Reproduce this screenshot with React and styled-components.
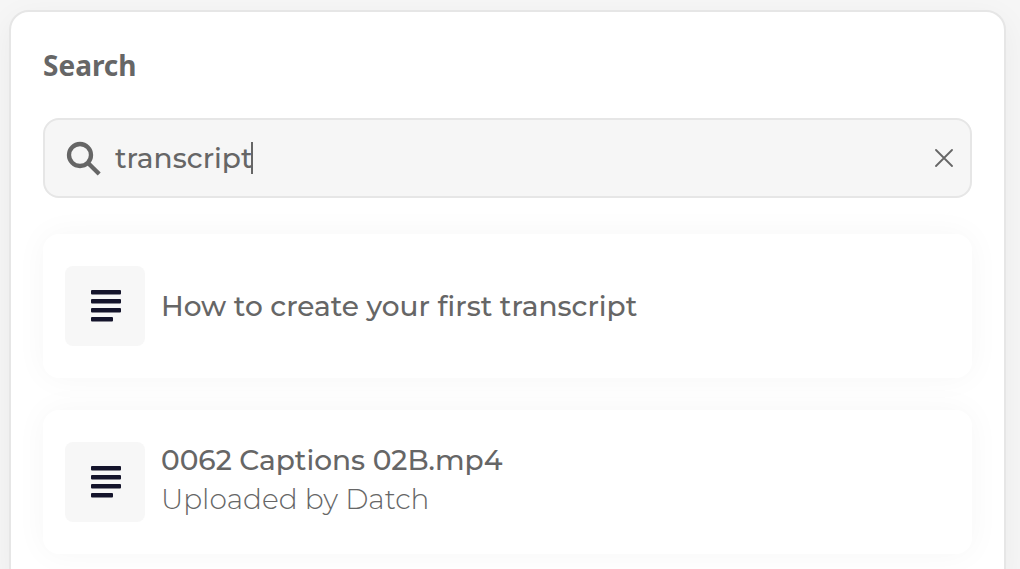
import React, {useState} from "react";
import styled, {createGlobalStyle} from "styled-components";

const files = [
  {id: 1, title: "How to create your first transcript"},
  {id: 2, title: "0062 Captions 02B.mp4", subtitle: "Uploaded by Datch"},
];

const SearchIcon = () => (
  <svg width="36" height="36" viewBox="0 0 36 36" fill="none" stroke="#666" strokeWidth="4.3" aria-hidden="true">
    <circle cx="15" cy="15" r="11" />
    <path d="M22.5 22.5L34.2 34" />
  </svg>
);

const ClearIcon = () => (
  <svg width="18" height="18" viewBox="0 0 18 18" stroke="#666" strokeWidth="1.8" strokeLinecap="round" aria-hidden="true">
    <path d="M1 1l16 16M17 1L1 17" />
  </svg>
);

const TextIcon = () => (
  <svg width="30" height="32" viewBox="0 0 30 32" fill="#14142b" aria-hidden="true">
    <rect y="0" width="30" height="4.5" rx="1" />
    <rect y="9" width="30" height="4.5" rx="1" />
    <rect y="18" width="30" height="4.5" rx="1" />
    <rect y="27" width="22" height="4.5" rx="1" />
  </svg>
);

const App = () => {
  const [query, setQuery] = useState("transcript");

  return (
    <Page>
      <GlobalStyle />
      <Panel>
        <Heading>Search</Heading>
        <SearchBar>
          <SearchLabel>
            <SearchIcon />
            <SearchInput
              type="text"
              aria-label="Search"
              value={query}
              onChange={(e) => setQuery(e.target.value)}
            />
            <Caret />
          </SearchLabel>
          <ClearButton type="button" aria-label="Clear" onClick={() => setQuery("")}>
            <ClearIcon />
          </ClearButton>
        </SearchBar>
        <Results>
          {files.map((file) => (
            <Result key={file.id}>
              <Thumb>
                <TextIcon />
              </Thumb>
              <div>
                <Title>{file.title}</Title>
                {file.subtitle && <Subtitle>{file.subtitle}</Subtitle>}
              </div>
            </Result>
          ))}
        </Results>
      </Panel>
    </Page>
  );
};

const GlobalStyle = createGlobalStyle`
  * {
    box-sizing: border-box;
  }
  body {
    margin: 0;
    background: #f6f6f6;
    color: #666;
    font-family: Montserrat, Inter, sans-serif;
    font-size: 28px;
  }
`;

const Page = styled.main`
  height: 100vh;
  overflow: hidden;
  padding: 10px 14px 10px 9px;
`;

const Panel = styled.section`
  padding: 32px;
  background: #fff;
  border: 2px solid #e6e6e6;
  border-radius: 20px;
  box-shadow: 0 8px 32px rgba(0, 0, 0, 0.05);
`;

const Heading = styled.h1`
  margin: 0 0 32px;
  font-family: "Noto Sans", sans-serif;
  font-size: 28px;
  font-weight: 700;
  line-height: 42px;
`;

const SearchBar = styled.div`
  display: flex;
  align-items: center;
  justify-content: space-between;
  height: 80px;
  padding: 0 17px 0 20px;
  background: #f6f6f6;
  border: 2px solid #e6e6e6;
  border-radius: 16px;
`;

const SearchLabel = styled.label`
  display: flex;
  flex: 1;
  align-items: center;
  cursor: text;
`;

const SearchInput = styled.input`
  field-sizing: content;
  margin: 0 0 0 14px;
  padding: 0;
  border: 0;
  outline: none;
  background: transparent;
  color: #666;
  caret-color: transparent;
  font-family: inherit;
  font-size: 28px;
  font-weight: 500;
`;

const Caret = styled.span`
  width: 2px;
  height: 32px;
  margin-left: -1px;
  background: #666;
`;

const ClearButton = styled.button`
  display: flex;
  padding: 0;
  border: 0;
  background: none;
  cursor: pointer;
`;

const Results = styled.ul`
  display: flex;
  flex-direction: column;
  gap: 32px;
  margin: 36px 0 0;
  padding: 0;
  list-style: none;
`;

const Result = styled.li`
  display: flex;
  align-items: center;
  gap: 16px;
  height: 144px;
  padding: 0 22px;
  background: #fff;
  border-radius: 16px;
  box-shadow: 0 0 32px rgba(0, 0, 0, 0.04);
`;

const Thumb = styled.div`
  display: flex;
  align-items: center;
  justify-content: center;
  flex-shrink: 0;
  width: 80px;
  height: 80px;
  padding-left: 2px;
  background: #f7f7f7;
  border-radius: 8px;
`;

const Title = styled.p`
  margin: 0;
  font-weight: 500;
  line-height: 39px;
`;

const Subtitle = styled.p`
  margin: 0 0 4px;
  font-weight: 300;
  line-height: 39px;
`;

export default App;
